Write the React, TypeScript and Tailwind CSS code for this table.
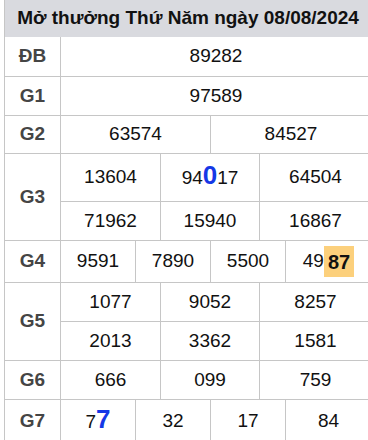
const BORDER = "border-[#c6c6c6]";

const Row = ({
  label,
  height,
  children,
}: {
  label: string;
  height: string;
  children: React.ReactNode;
}) => (
  <div className={`flex border-b ${BORDER} ${height}`}>
    <div
      className={`w-[56px] shrink-0 border-r ${BORDER} flex items-center justify-center font-bold text-[19px] text-[#454545]`}
    >
      {label}
    </div>
    <div className="flex-1 flex flex-col">{children}</div>
  </div>
);

const Cells = ({
  widths,
  values,
  className = "",
}: {
  widths: string[];
  values: React.ReactNode[];
  className?: string;
}) => (
  <div className={`flex flex-1 ${className}`}>
    {values.map((v, i) => (
      <div
        key={i}
        className={`${widths[i]} ${
          i < values.length - 1 ? `border-r ${BORDER}` : ""
        } flex items-center justify-center text-[19px] text-[#111]`}
      >
        {v}
      </div>
    ))}
  </div>
);

const THREE = ["w-[100px]", "w-[99px]", "flex-1"];
const FOUR = ["w-[75px]", "w-[75px]", "w-[75px]", "flex-1"];

export default function App() {
  return (
    <div
      className="w-[368px] h-[440px] overflow-hidden bg-white"
      style={{ fontFamily: '"Liberation Sans", Arial, sans-serif' }}
    >
      <div className={`ml-[4px] w-[367px] border-l ${BORDER}`}>
        <div className="h-[37px] bg-[#d9dadf] flex items-center justify-center font-bold text-[19px] text-[#111] whitespace-nowrap">
          Mở thưởng Thứ Năm ngày 08/08/2024
        </div>
        <Row label="ĐB" height="h-[40px]">
          <Cells widths={["flex-1"]} values={["89282"]} />
        </Row>
        <Row label="G1" height="h-[39px]">
          <Cells widths={["flex-1"]} values={["97589"]} />
        </Row>
        <Row label="G2" height="h-[38px]">
          <Cells widths={["w-[150px]", "flex-1"]} values={["63574", "84527"]} />
        </Row>
        <Row label="G3" height="h-[87px]">
          <Cells
            widths={THREE}
            className={`border-b ${BORDER}`}
            values={[
              "13604",
              <span key="b">
                94
                <span className="font-bold text-[26px] leading-none text-[#1538e6]">
                  0
                </span>
                17
              </span>,
              "64504",
            ]}
          />
          <div className="h-[38px] flex">
            <Cells widths={THREE} values={["71962", "15940", "16867"]} />
          </div>
        </Row>
        <Row label="G4" height="h-[42px]">
          <Cells
            widths={FOUR}
            values={[
              "9591",
              "7890",
              "5500",
              <span key="h" className="flex items-center">
                49
                <span className="bg-[#fcd07c] font-bold text-[20px] px-[4px] h-[31px] flex items-center">
                  87
                </span>
              </span>,
            ]}
          />
        </Row>
        <Row label="G5" height="h-[78px]">
          <Cells
            widths={THREE}
            className={`border-b ${BORDER}`}
            values={["1077", "9052", "8257"]}
          />
          <Cells widths={THREE} values={["2013", "3362", "1581"]} />
        </Row>
        <Row label="G6" height="h-[39px]">
          <Cells widths={THREE} values={["666", "099", "759"]} />
        </Row>
        <Row label="G7" height="h-[44px]">
          <Cells
            widths={FOUR}
            values={[
              <span key="s">
                7
                <span className="font-bold text-[26px] leading-none text-[#1538e6]">
                  7
                </span>
              </span>,
              "32",
              "17",
              "84",
            ]}
          />
        </Row>
      </div>
    </div>
  );
}
